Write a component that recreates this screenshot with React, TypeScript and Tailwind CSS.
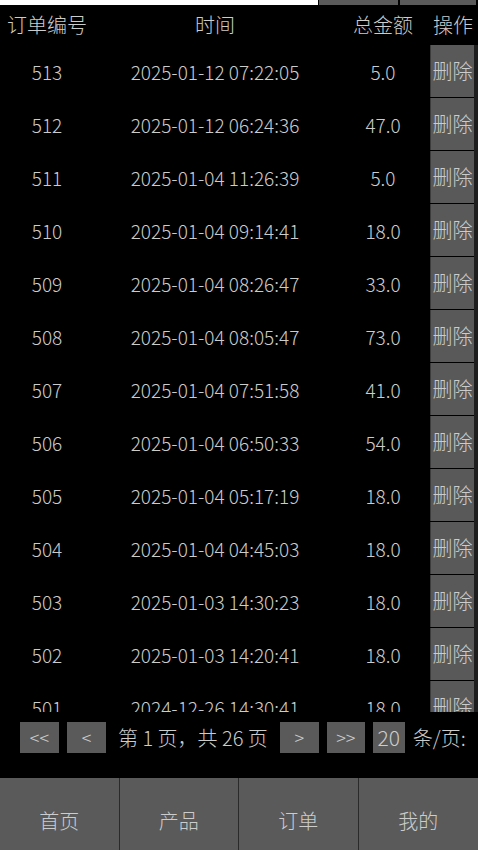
import React from "react";

const rows: [string, string, string][] = [
  ["513", "2025-01-12 07:22:05", "5.0"],
  ["512", "2025-01-12 06:24:36", "47.0"],
  ["511", "2025-01-04 11:26:39", "5.0"],
  ["510", "2025-01-04 09:14:41", "18.0"],
  ["509", "2025-01-04 08:26:47", "33.0"],
  ["508", "2025-01-04 08:05:47", "73.0"],
  ["507", "2025-01-04 07:51:58", "41.0"],
  ["506", "2025-01-04 06:50:33", "54.0"],
  ["505", "2025-01-04 05:17:19", "18.0"],
  ["504", "2025-01-04 04:45:03", "18.0"],
  ["503", "2025-01-03 14:30:23", "18.0"],
  ["502", "2025-01-03 14:20:41", "18.0"],
  ["501", "2024-12-26 14:30:41", "18.0"],
];

const font = { fontFamily: '"Noto Sans CJK SC", "Noto Sans", sans-serif' };

export default function App() {
  return (
    <div
      className="w-[478px] h-[850px] bg-black text-[#cccccc] flex flex-col overflow-hidden font-extralight"
      style={font}
    >
      {/* top cut-off bar */}
      <div className="h-[5px] flex shrink-0">
        <div className="w-[318px] bg-white" />
        <div className="w-[79px] ml-[1px] bg-[#5a5a5a]" />
        <div className="w-[76px] ml-[2px] bg-[#5a5a5a]" />
      </div>

      {/* header */}
      <div className="h-[40px] grid grid-cols-[94px_242px_94px_48px] items-center text-[20px] shrink-0">
        <div className="text-center">订单编号</div>
        <div className="text-center">时间</div>
        <div className="text-center">总金额</div>
        <div className="text-center pr-[2px]">操作</div>
      </div>

      {/* rows */}
      <div className="h-[667px] overflow-hidden shrink-0">
        {rows.map(([id, t, amt]) => (
          <div
            key={id}
            className="h-[53px] grid grid-cols-[94px_242px_94px_48px] items-center text-[19px]"
          >
            <div className="text-center pt-[2px]">{id}</div>
            <div className="text-center pt-[2px]">{t}</div>
            <div className="text-center pt-[2px]">{amt}</div>
            <div className="h-full flex">
              <div className="w-[44px] h-[52px] bg-[#595959] border-l border-[#3c3c3c] flex items-center justify-center text-[20px] whitespace-nowrap">
                删除
              </div>
              <div className="w-[4px] bg-[#1e1e1e]" />
            </div>
          </div>
        ))}
      </div>

      {/* pagination */}
      <div className="h-[66px] flex items-start pt-[10px] pl-[20px] text-[20px] shrink-0">
        <div className="w-[39px] h-[31px] bg-[#5a5a5a] flex items-center justify-center text-[18px]">&lt;&lt;</div>
        <div className="w-[39px] h-[31px] ml-[8px] bg-[#5a5a5a] flex items-center justify-center text-[18px]">&lt;</div>
        <div className="h-[31px] ml-[12px] flex items-center whitespace-nowrap">第 1 页，共 26 页</div>
        <div className="w-[39px] h-[31px] ml-[12px] bg-[#5a5a5a] flex items-center justify-center text-[18px]">&gt;</div>
        <div className="w-[38px] h-[31px] ml-[8px] bg-[#5a5a5a] flex items-center justify-center text-[18px]">&gt;&gt;</div>
        <div className="w-[32px] h-[31px] ml-[8px] bg-[#5a5a5a] flex items-center justify-center text-[21px]">20</div>
        <div className="h-[31px] ml-[8px] flex items-center whitespace-nowrap">条/页:</div>
      </div>

      {/* bottom nav */}
      <div className="h-[86px] shrink-0 grid grid-cols-4 bg-[#5a5a5a] text-[20px]">
        {["首页", "产品", "订单", "我的"].map((n, i) => (
          <div
            key={n}
            className={`flex items-center justify-center ${i < 3 ? "border-r border-[#2a2a2a]" : ""}`}
          >
            {n}
          </div>
        ))}
      </div>
    </div>
  );
}
